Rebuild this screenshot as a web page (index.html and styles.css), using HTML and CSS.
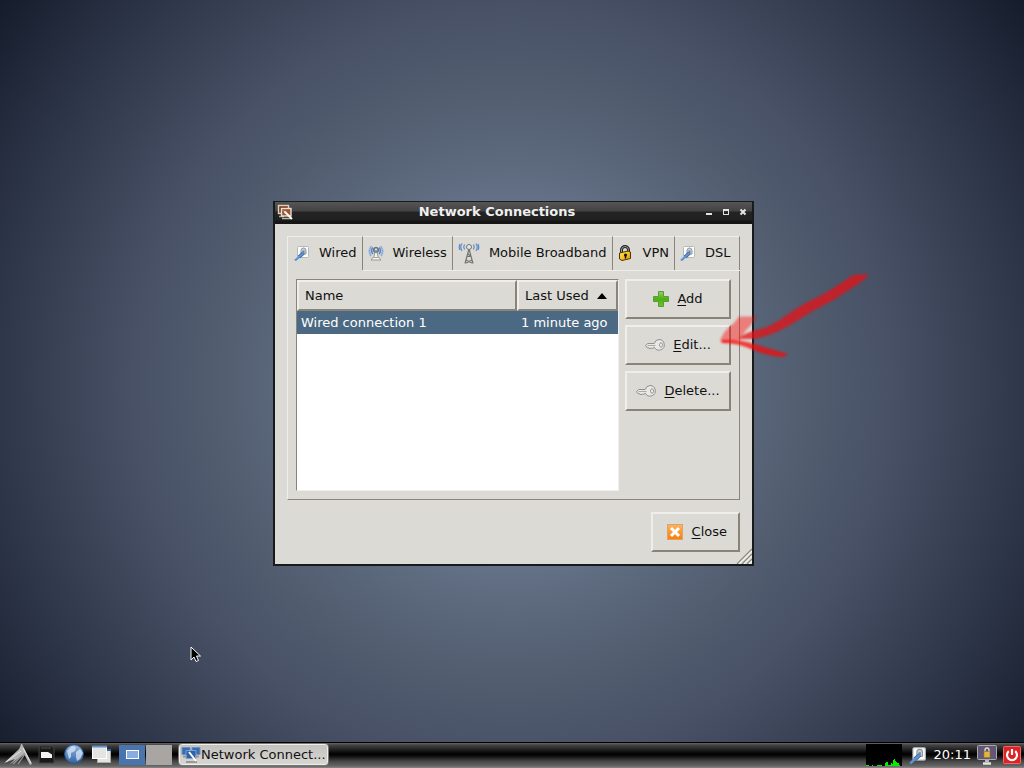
FILE: index.html
```html
<!DOCTYPE html>
<html lang="en">
<head>
<meta charset="utf-8">
<title>Network Connections</title>
<link rel="stylesheet" href="styles.css">
</head>
<body>
<svg class="defs" aria-hidden="true">
  <defs>
    <linearGradient id="sky" x1="0" y1="0" x2="0" y2="1"><stop offset="0" stop-color="#9dbbe0"/><stop offset="1" stop-color="#2f62a4"/></linearGradient>
    <linearGradient id="leaf" x1="0" y1="0" x2="0" y2="1"><stop offset="0" stop-color="#8fd65c"/><stop offset=".5" stop-color="#4fae14"/><stop offset="1" stop-color="#62cc20"/></linearGradient>
    <linearGradient id="amber" x1="0" y1="0" x2="0" y2="1"><stop offset="0" stop-color="#fbb565"/><stop offset="1" stop-color="#fb7d05"/></linearGradient>
    <linearGradient id="gold" x1="0" y1="0" x2="1" y2="1"><stop offset="0" stop-color="#fff04a"/><stop offset="1" stop-color="#e89200"/></linearGradient>
    <symbol id="plug" viewBox="0 0 16 16">
      <rect x="3.500" y="1.500" width="11" height="11" rx="1" fill="#fdfdfd" stroke="#b5b9bd"/>
      <path d="M7 9V5.500a2.500 2.500 0 0 1 5 0V9z" fill="#c8cfd4" stroke="#8c969e"/>
      <rect x="8.500" y="5.500" width="2" height="3" fill="#76838f"/>
      <path d="M9.500 8 5 12" stroke="#2f5f9f" stroke-width="3.600"/>
      <path d="M9.500 8 1 15.500" stroke="#5e92d2" stroke-width="2.200"/>
    </symbol>
    <symbol id="key" viewBox="0 0 20 16">
      <path d="M14 2.500a5.300 5.300 0 1 1-4.700 7.800H8.500L7.500 12l-1.200-1.200L5 12l-1-1.200H2.200L.6 8.700 2.500 6.500h6.800A5.300 5.300 0 0 1 14 2.500z" fill="#e8e8e5" stroke="#90928e"/>
      <path d="M2.500 8.500h8" stroke="#aaaca8"/>
      <ellipse cx="16" cy="8" rx="1.400" ry="2.200" fill="#fff" stroke="#90928e"/>
    </symbol>
  </defs>
</svg>

<main class="desktop">
  <section class="window" aria-labelledby="title">
    <header class="titlebar">
      <svg class="i16" viewBox="0 0 16 16" aria-hidden="true">
        <rect x="1.500" y="1.500" width="10" height="8" fill="#7b3a16" stroke="#d8d4cc" stroke-width="1.400"/>
        <path d="M2 12.500h5" stroke="#aaa69e" stroke-width="1.500"/>
        <rect x="4.500" y="4.500" width="9.500" height="7.500" fill="#a4522a" stroke="#e6e2da" stroke-width="1.400"/>
        <path d="M5 14.500h9" stroke="#b8b4ac" stroke-width="1.500"/>
        <path d="M8 8l7 7" stroke="#fff" stroke-width="1.800"/><path d="M6.500 6.500l1 3 2-2z" fill="#ddd"/>
      </svg>
      <h1 id="title">Network Connections</h1>
      <div class="controls">
        <button type="button" aria-label="Minimize"><svg viewBox="0 0 8 8"><path d="M1 6h6" stroke="#e4e4e4" stroke-width="2"/></svg></button>
        <button type="button" aria-label="Maximize"><svg viewBox="0 0 8 8"><path d="M1.500 2v5M6.500 2v5M1 6.500h6" stroke="#e4e4e4"/><path d="M1 2h6" stroke="#e4e4e4" stroke-width="2"/></svg></button>
        <button type="button" aria-label="Close window"><svg viewBox="0 0 8 8"><path d="M1.500 1.500l5 5M6.500 1.500l-5 5" stroke="#e4e4e4" stroke-width="2"/></svg></button>
      </div>
    </header>

    <div class="content">
      <div class="notebook">
        <div class="tabs" role="tablist">
          <button class="tab active" type="button" role="tab" aria-selected="true" aria-controls="panel"><svg class="i16"><use href="#plug"/></svg>Wired</button>
          <button class="tab" type="button" role="tab" aria-selected="false"><svg class="i16" viewBox="0 0 16 16">
            <path d="M3.500 1Q-.5 5.500 3 11M12.500 1q4 4.500.5 10" fill="none" stroke="#8fb0dc" stroke-width="1.800"/>
            <path d="M5 2.500Q2 5.500 5 9M11 2.500q3 3 0 6.500" fill="none" stroke="#5c86c0" stroke-width="1.600"/>
            <circle cx="8" cy="5" r="2.600" fill="#7e8f9e" stroke="#566779"/><circle cx="8" cy="4.500" r="1" fill="#dfe8f0"/>
            <path d="M7 7.500h2l1 4 3 3.500H3l3-3.500z" fill="#f2f2f0" stroke="#888a85" stroke-width=".8"/><path d="M5 12.500h6" stroke="#a3a5a0"/>
          </svg>Wireless</button>
          <button class="tab" type="button" role="tab" aria-selected="false"><svg class="i22" viewBox="0 0 22 22">
            <path d="M4 1.500Q1.500 5 4 9M18 1.500q2.500 3.500 0 7.500M2 2Q.5 5 2 8M20 2q1.500 3 0 6" fill="none" stroke="#5b88c6" stroke-width="1.200"/>
            <path d="M6.500 2.500q-1.500 2.500 0 5M15.500 2.500q1.500 2.500 0 5" fill="none" stroke="#5b88c6" stroke-width="1.200"/>
            <path d="M11 7 7 21.500M11 7l4 14.500M9 14.500h4M8 18l6 3M14 18l-6 3M9.500 11.500l4 3.500" fill="none" stroke="#72756f" stroke-width="1.200"/>
            <circle cx="11" cy="5" r="2.500" fill="#e5e6e3" stroke="#72756f"/>
          </svg>Mobile Broadband</button>
          <button class="tab" type="button" role="tab" aria-selected="false"><svg class="i16" viewBox="0 0 16 16">
            <path d="M3.500 8V5a3.500 3.500 0 0 1 7 0v3" fill="none" stroke="#222" stroke-width="3"/>
            <path d="M3.500 8V5a3.500 3.500 0 0 1 7 0v2" fill="none" stroke="#999"/>
            <path d="M1.500 8l8.500-2 2.500 1v6.500L4 15.500 1.500 14z" fill="url(#gold)" stroke="#4a3300"/>
            <circle cx="7.500" cy="10" r="1.500" fill="#111"/><path d="M7.500 10v3.500" stroke="#111" stroke-width="1.500"/>
          </svg>VPN</button>
          <button class="tab" type="button" role="tab" aria-selected="false"><svg class="i16"><use href="#plug"/></svg>DSL</button>
        </div>

        <div class="panel" id="panel" role="tabpanel">
          <div class="list">
            <table>
              <thead>
                <tr>
                  <th class="name" scope="col">Name</th>
                  <th scope="col" aria-sort="ascending"><span class="sort">Last Used <svg class="caret" viewBox="0 0 10 6"><path d="M0 6 5 0l5 6z" fill="#000"/></svg></span></th>
                </tr>
              </thead>
              <tbody>
                <tr><td>Wired connection 1</td><td>1 minute ago</td></tr>
              </tbody>
            </table>
          </div>
          <div class="actions">
            <button class="button" type="button"><svg class="i16" viewBox="0 0 16 16"><path d="M5.500.5h5v5h5v5h-5v5h-5v-5h-5v-5h5z" fill="url(#leaf)" stroke="#5a9a44"/></svg><span><u>A</u>dd</span></button>
            <button class="button" type="button"><svg class="i20"><use href="#key"/></svg><span><u>E</u>dit...</span></button>
            <button class="button" type="button"><svg class="i20"><use href="#key"/></svg><span><u>D</u>elete...</span></button>
          </div>
        </div>
      </div>

      <div class="footer">
        <button class="button close" type="button"><svg class="i16" viewBox="0 0 16 16"><rect x=".5" y=".5" width="15" height="15" fill="url(#amber)" stroke="#dba368"/><path d="M4 4l8 8M12 4l-8 8" stroke="#fff" stroke-width="3"/></svg><span><u>C</u>lose</span></button>
      </div>
      <svg class="grip" viewBox="0 0 16 16" aria-hidden="true">
        <path d="M1 16 16 1M6 16 16 6M11 16l5-5" stroke="#8c887c" stroke-width="1.400"/>
        <path d="M3 16 16 3M8 16l8-8M13 16l3-3" stroke="#f4f3ef" stroke-width="1.200"/>
      </svg>
    </div>
  </section>

  <svg class="arrow" viewBox="0 0 180 110" aria-hidden="true">
    <path d="M20 81Q23 71 34 63L39 56.500H57L50 66Q43 73 40 80L22 83z" fill="#ff0000" fill-opacity=".42"/>
    <path d="M153 15L169 14L164 20Q146 32 132 41Q113 50 95 62Q75 75 55 79L39 79Q42 73 64 68Q75 64 88 54Q104 43 120 36Q136 27 153 15z" fill="#e81014" fill-opacity=".74"/>
    <path d="M22 80Q38 79 54 84Q68 88 88 94L84 97Q66 96 51 89Q38 83 22 83z" fill="#f80808" fill-opacity=".74"/>
  </svg>

  <svg class="pointer" viewBox="0 0 12 18" aria-hidden="true"><path d="M1 1v13l3-3 2 4.500 2.500-1L6.500 10h4z" fill="#000" stroke="#fff"/></svg>
</main>

<footer class="taskbar">
  <nav class="launchers" aria-label="Launchers">
    <button type="button" aria-label="Menu"><svg viewBox="0 0 30 24"><path d="M1 20 14 8Q17 6 18 1q1-1 2 2l2 4 7 14-2 1-6-11-8 6-7 5 6-6z" fill="#b4b5b3"/><path d="M10 21 22 10M15 21l7-10" stroke="#999" stroke-width="1.200"/><path d="M3 19 18 8M20 5l8 15" stroke="#e8e8e8"/></svg></button>
    <button type="button" aria-label="File manager"><svg viewBox="0 0 20 24"><path d="M3 3h12l2 3v14H2V6z" fill="#191919" stroke="#444"/><path d="M4 5h10" stroke="#555"/><path d="M4 9h7l4 2.500V15H4z" fill="#f4f4f4"/></svg></button>
    <button type="button" aria-label="Web browser"><svg viewBox="0 0 20 24"><circle cx="10" cy="11" r="9.300" fill="url(#sky)" stroke="#2c5a96"/><path d="M3 8 8 3l4 1-1 4-4 2v4l-2 2zM12 9l4-3 3 4-3 6-3 2-1-4z" fill="#d9e8f6" fill-opacity=".75"/></svg></button>
    <button type="button" aria-label="Show desktop"><svg viewBox="0 0 20 24"><rect x="6.500" y="7.500" width="13" height="12" fill="#e4e5e2" stroke="#aaa"/><path d="M6 7h14" stroke="#3465a4" stroke-width="2"/><rect x="1.500" y="3.500" width="14" height="12" fill="#e4e5e2" stroke="#fff"/><path d="M1 3.500h15" stroke="#5d8fc9" stroke-width="2"/></svg></button>
  </nav>
  <div class="pager">
    <button class="desk current" type="button" aria-label="Desktop 1"><span class="mini"></span></button>
    <button class="desk" type="button" aria-label="Desktop 2"></button>
  </div>
  <button class="task" type="button"><svg class="i20" viewBox="0 0 20 18" aria-hidden="true">
    <path d="M1 1.500h8v7H1zM11 1.500h8v7h-8z" fill="#386cb0" stroke="#6a92c6"/><path d="M5 4.500h10v8H5z" fill="#2f62a8" stroke="#7ca0cf"/><path d="M2 10.500h4M14 10.500h4M5 16h11" stroke="#999" stroke-width="2"/><path d="M8 6l7 9" stroke="#fff" stroke-width="2"/></svg>Network Connect...</button>
  <div class="tray">
    <svg class="monitor" viewBox="0 0 36 22" aria-hidden="true"><path d="M0 0h36v22H0z" fill="#000"/><path d="M0 22v-1h3v1h3v-1h1v1h4v-1h5v1h3v-3h1v-1h2v3h3v-2h1v1h1v-4h1v-1h1v2h1v1h1v1h2v2h1v2z" fill="#00f000"/></svg>
    <svg class="i20" viewBox="0 0 16 16" role="img" aria-label="Network"><use href="#plug"/></svg>
    <time>20:11</time>
    <button type="button" aria-label="Lock screen"><svg viewBox="0 0 20 20"><rect x=".5" y=".5" width="19" height="14" rx="1" fill="#625575" stroke="#aaa"/><path d="M8 15h4v2H8z" fill="#bbb"/><path d="M6 18.500h8" stroke="#e4e4e4" stroke-width="2.500"/><path d="M8 7V5a2 2 0 0 1 4 0v2" fill="none" stroke="#ddd" stroke-width="1.300"/><rect x="7" y="6.500" width="6" height="6" fill="#e2b644" stroke="#9d7415" stroke-width=".6"/></svg></button>
    <button type="button" aria-label="Shut down"><svg viewBox="0 0 18 18"><rect x=".5" y=".5" width="17" height="17" rx="1" fill="#dd2224" stroke="#ef6b6b"/><path d="M5.800 5.200a5 5 0 1 0 6.400 0M9 3v6" fill="none" stroke="#fff" stroke-width="2.200"/></svg></button>
  </div>
</footer>
</body>
</html>
```

FILE: styles.css
```css
* { box-sizing: border-box; }

body {
  margin: 0;
  min-height: 100vh;
  display: flex;
  flex-direction: column;
  overflow: hidden;
  font: 13px/16px "DejaVu Sans", sans-serif;
  color: #111;
  background: radial-gradient(circle farthest-corner at 50% 50%, #707d94 0%, #667389 27%, #586477 39%, #485165 59%, #30384c 79%, #151c2b 100%);
}

button { font: inherit; color: inherit; margin: 0; padding: 0; border: 0; background: none; }
svg { display: block; flex: none; }
u { text-underline-offset: 2px; text-decoration-skip-ink: none; }

.defs { position: absolute; width: 0; height: 0; }
.i16 { width: 16px; height: 16px; }
.i20 { width: 20px; height: 18px; }
.i22 { width: 22px; height: 22px; }

.desktop { flex: 1; position: relative; }

/* Window */
.window {
  position: absolute;
  left: 273px;
  top: 201px;
  width: 481px;
  border: 2px solid #191a1c;
  border-top-width: 1px;
  background: #dbdad5;
}

.titlebar {
  display: flex;
  align-items: center;
  height: 22px;
  padding: 0 5px 2px 2px;
  background: linear-gradient(#555 0, #434343 9px, #242424 10px, #202020 18px, #151515 19px);
}
.titlebar h1 {
  flex: 1;
  margin: 0;
  padding-right: 4px;
  font-size: 13px;
  line-height: 16px;
  text-align: center;
  color: #f0f0f0;
}
.controls { display: flex; gap: 9px; }
.controls svg { width: 8px; height: 8px; }

.content { position: relative; padding: 12px; }

/* Notebook */
.tabs { display: flex; height: 34px; }
.tab {
  display: flex;
  align-items: center;
  gap: 9px;
  padding: 0 5px 2px;
  border-top: 1px solid #efeeeb;
  border-right: 1px solid #88847a;
  box-shadow: 0 1px #efeeeb;
  white-space: nowrap;
}
.tab.active {
  padding-left: 6px;
  border-left: 1px solid #efeeeb;
  box-shadow: none;
}
.tab:last-child { flex: 1; }

.panel {
  display: flex;
  gap: 6px;
  padding: 9px 8px 8px;
  border: 1px solid #88847a;
  border-top: 0;
  border-left-color: #efeeeb;
}
.list {
  flex: 1;
  min-height: 212px;
  border: 1px solid #efeeeb;
  border-top-color: #88847a;
  border-left-color: #88847a;
  background: #fff;
}
table { width: 100%; border-collapse: separate; border-spacing: 0; }
th {
  height: 31px;
  padding: 0 6px;
  border: 2px solid #efeeeb;
  border-right-color: #88847a;
  border-bottom-color: #88847a;
  background: #dbdad5;
  font-weight: normal;
  text-align: left;
  white-space: nowrap;
}
th.name { width: 220px; }
.sort { display: flex; align-items: center; gap: 8px; }
.caret { width: 10px; height: 6px; }
td { height: 23px; padding: 0 4px; background: #4b6983; color: #fff; white-space: nowrap; }

.actions { display: flex; flex-direction: column; gap: 6px; width: 106px; }
.button {
  display: flex;
  align-items: center;
  justify-content: center;
  gap: 8px;
  height: 40px;
  border: 2px solid #efeeeb;
  border-right-color: #88847a;
  border-bottom-color: #88847a;
}
.footer { display: flex; justify-content: flex-end; margin-top: 12px; }
.close { padding: 0 11px 0 14px; gap: 9px; }
.grip { position: absolute; right: 0; bottom: 0; width: 16px; height: 16px; }

/* Overlays */
.arrow { position: absolute; left: 700px; top: 260px; width: 180px; height: 110px; filter: blur(1px); }
.pointer { position: absolute; left: 190px; top: 646px; width: 12px; height: 18px; }

/* Taskbar */
.taskbar {
  display: flex;
  align-items: center;
  height: 26px;
  padding-bottom: 2px;
  border-top: 1px solid #000;
  background: linear-gradient(#666 0, #444 2px, #000 11px, #0c0c0c 13px, #444 18px, #666 23px, #888 25px);
}
.launchers { display: flex; gap: 7px; padding-left: 3px; }
.launchers svg { width: 20px; height: 24px; }
.launchers button:first-child svg { width: 30px; }
.launchers button:first-child { margin-right: -3px; }
.pager { display: flex; gap: 1px; margin-left: 8px; }
.desk { display: flex; align-items: center; justify-content: center; width: 26px; height: 20px; background: #a9a5a2; }
.desk.current { background: #4a74ad; }
.mini { width: 13px; height: 9px; border: 1px solid #fff; background: #88aee0; }
.task {
  display: flex;
  align-items: center;
  height: 23px;
  margin-left: 6px;
  padding: 0 2px;
  border: 1px solid #77756f;
  border-radius: 4px;
  background: linear-gradient(#c3c1bd, #d8d7d4);
  box-shadow: inset 0 0 0 1px #eeedeb;
  white-space: nowrap;
}
.tray { display: flex; align-items: center; gap: 6px; margin-left: auto; padding-right: 3px; color: #fff; }
.monitor { width: 36px; height: 22px; }
.tray button svg { width: 20px; height: 20px; }
.tray button:last-child svg { width: 18px; height: 18px; }
```
